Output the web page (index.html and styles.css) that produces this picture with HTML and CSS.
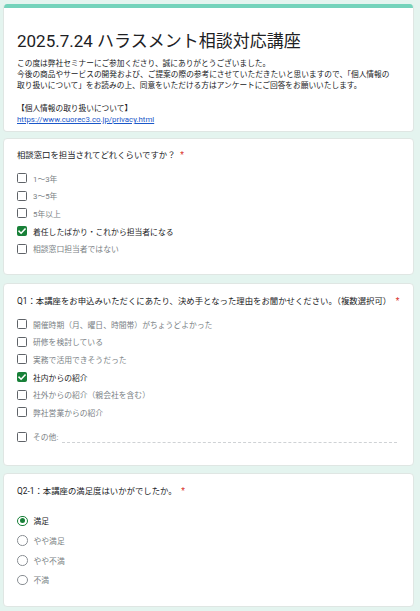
FILE: index.html
```html
<!DOCTYPE html>
<html lang="ja">
<head>
<meta charset="utf-8">
<title>2025.7.24 ハラスメント相談対応講座</title>
<link rel="stylesheet" href="styles.css">
</head>
<body>
<div class="page">
  <div class="card header">
    <div class="bar"></div>
    <div class="header-body">
      <h1 class="title">2025.7.24 ハラスメント相談対応講座</h1>
      <div class="desc">
        <div class="line">この度は弊社セミナーにご参加くださり、誠にありがとうございました。</div>
        <div class="line">今後の商品やサービスの開発および、ご提案の際の参考にさせていただきたいと思いますので、「個人情報の</div>
        <div class="line">取り扱いについて」をお読みの上、同意をいただける方はアンケートにご回答をお願いいたします。</div>
        <div class="line blank">&nbsp;</div>
        <div class="line">【個人情報の取り扱いについて】</div>
        <div class="line"><a class="link" href="#">https://www.cuorec3.co.jp/privacy.html</a></div>
      </div>
    </div>
  </div>

  <div class="card q q2">
    <div class="qtitle">相談窓口を担当されてどれくらいですか？<span class="req">*</span></div>
    <div class="options checks">
      <div class="opt"><span class="cb"></span><span class="lbl">1〜3年</span></div>
      <div class="opt"><span class="cb"></span><span class="lbl">3〜5年</span></div>
      <div class="opt"><span class="cb"></span><span class="lbl">5年以上</span></div>
      <div class="opt on"><span class="cb"><svg viewBox="0 0 10 10" width="10" height="10"><path d="M2.1 5.2 L4.1 7.2 L8 3.1" fill="none" stroke="#fff" stroke-width="1.6" stroke-linecap="square"/></svg></span><span class="lbl">着任したばかり・これから担当者になる</span></div>
      <div class="opt"><span class="cb"></span><span class="lbl">相談窓口担当者ではない</span></div>
    </div>
  </div>

  <div class="card q q3">
    <div class="qtitle">Q1：本講座をお申込みいただくにあたり、決め手となった理由をお聞かせください。（複数選択可）<span class="req">*</span></div>
    <div class="options checks">
      <div class="opt"><span class="cb"></span><span class="lbl">開催時期（月、曜日、時間帯）がちょうどよかった</span></div>
      <div class="opt"><span class="cb"></span><span class="lbl">研修を検討している</span></div>
      <div class="opt"><span class="cb"></span><span class="lbl">実務で活用できそうだった</span></div>
      <div class="opt on"><span class="cb"><svg viewBox="0 0 10 10" width="10" height="10"><path d="M2.1 5.2 L4.1 7.2 L8 3.1" fill="none" stroke="#fff" stroke-width="1.6" stroke-linecap="square"/></svg></span><span class="lbl">社内からの紹介</span></div>
      <div class="opt"><span class="cb"></span><span class="lbl">社外からの紹介（親会社を含む）</span></div>
      <div class="opt"><span class="cb"></span><span class="lbl">弊社営業からの紹介</span></div>
      <div class="opt other"><span class="cb"></span><span class="lbl">その他:</span><span class="other-line"></span></div>
    </div>
  </div>

  <div class="card q q4">
    <div class="qtitle">Q2-1：本講座の満足度はいかがでしたか。<span class="req">*</span></div>
    <div class="options radios">
      <div class="opt on"><span class="rd"><span class="dot"></span></span><span class="lbl">満足</span></div>
      <div class="opt"><span class="rd"></span><span class="lbl">やや満足</span></div>
      <div class="opt"><span class="rd"></span><span class="lbl">やや不満</span></div>
      <div class="opt"><span class="rd"></span><span class="lbl">不満</span></div>
    </div>
  </div>
</div>
</body>
</html>
```

FILE: styles.css
```css
* { box-sizing: border-box; }
html, body {
  margin: 0;
  padding: 0;
  background: #e4f4ef;
}
body {
  font-family: Roboto, Arial, "Noto Sans CJK JP", sans-serif;
  color: #202124;
}
.page {
  width: 420px;
  height: 611px;
  overflow: hidden;
  padding: 4px 6px 0 3px;
  display: flex;
  flex-direction: column;
  gap: 6px;
}
.card {
  background: #fff;
  border: 1px solid #dfe6e3;
  border-radius: 4px;
  flex: none;
}
.header {
  border-top-width: 0;
  overflow: hidden;
}
.bar {
  height: 4px;
  background: #74d3bb;
  margin: 0 -1px;
}
.header-body {
  padding: 22px 13px 6px 13px;
}
.title {
  margin: 0;
  font-weight: 400;
  font-size: 17px;
  line-height: 22px;
  color: #202124;
}
.desc {
  margin-top: 6px;
  font-size: 7.7px;
  line-height: 11.2px;
  color: #202124;
}
.line { white-space: nowrap; }
.link {
  color: #1a57c9;
  font-size: 7.85px;
  text-decoration: underline;
}
.q {
  padding: 10px 13px 16.5px 13px;
}
.q3 {
  margin-top: 2px;
  padding-top: 10.5px;
  padding-bottom: 17px;
}
.q4 {
  margin-top: 1px;
  padding-top: 11px;
  padding-bottom: 16px;
}
.qtitle {
  font-size: 8.4px;
  line-height: 12px;
  white-space: nowrap;
  color: #202124;
}
.req {
  color: #d93025;
  margin-left: 4.5px;
}
.options {
  display: flex;
  flex-direction: column;
}
.checks { margin-top: 8px; }
.q3 .checks { margin-top: 8.5px; }
.radios { margin-top: 14.5px; }
.opt {
  display: flex;
  align-items: center;
  height: 17.7px;
}
.radios .opt { height: 19.7px; }
.cb {
  width: 10px;
  height: 10px;
  border: 1.5px solid #5f6368;
  border-radius: 1.5px;
  flex: none;
  display: flex;
  align-items: center;
  justify-content: center;
}
.cb svg { display: block; flex: none; }
.opt.on .cb {
  background: #188038;
  border-color: #188038;
}
.rd {
  width: 10.5px;
  height: 10.5px;
  border: 1px solid #8a8f94;
  border-radius: 50%;
  flex: none;
  display: flex;
  align-items: center;
  justify-content: center;
}
.opt.on .rd { border: 1.2px solid #188038; }
.dot {
  width: 5px;
  height: 5px;
  border-radius: 50%;
  background: #188038;
}
.lbl {
  margin-left: 6px;
  font-size: 7.8px;
  color: #7a7f85;
  white-space: nowrap;
}
.opt.on .lbl { color: #202124; }
.other {
  height: 22px;
  margin-top: 4.3px;
}
.other-line {
  flex: 1;
  align-self: flex-start;
  margin-top: 16.5px;
  margin-left: 4px;
  margin-right: 3px;
  border-bottom: 1px dashed #cfd2d5;
}
```
